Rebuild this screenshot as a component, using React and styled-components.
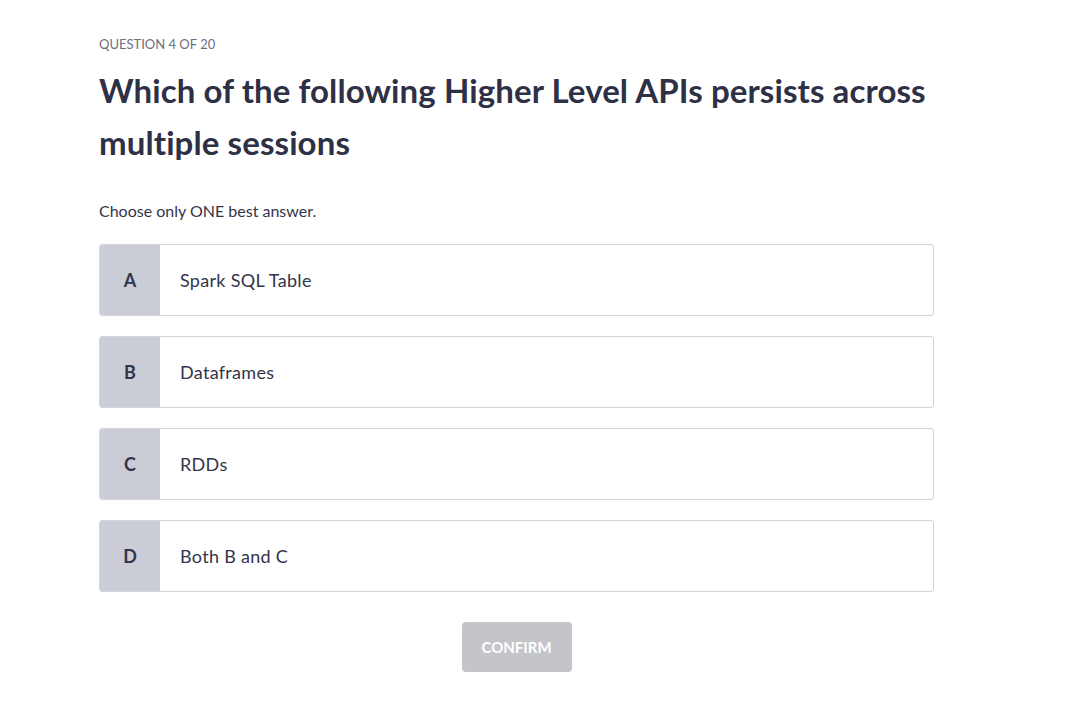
import React, { useState } from "react";
import styled, { createGlobalStyle } from "styled-components";

const GlobalStyle = createGlobalStyle`
  * { box-sizing: border-box; }
  body {
    margin: 0;
    background: #ffffff;
    font-family: Lato, "Noto Sans", "Liberation Sans", sans-serif;
    color: #33354a;
  }
`;

const Page = styled.main`
  padding: 36px 0 40px 99px;
`;

const Quiz = styled.section`
  width: 835px;
  display: flex;
  flex-direction: column;
`;

const Counter = styled.div`
  font-size: 13px;
  line-height: 16px;
  color: #6c7080;
  text-transform: uppercase;
`;

const Question = styled.h1`
  margin: 12px 0 0;
  font-size: 33px;
  line-height: 52px;
  font-weight: 700;
  color: #2e3045;
  letter-spacing: 0.1px;
`;

const Hint = styled.p`
  margin: 33px 0 23px;
  font-size: 16px;
  line-height: 20px;
  color: #33354a;
`;

const Options = styled.div`
  display: flex;
  flex-direction: column;
  gap: 20px;
`;

const Option = styled.button`
  display: flex;
  align-items: stretch;
  height: 72px;
  padding: 0;
  border: 1px solid ${(p) => (p.selected ? "#8a8fa3" : "#d3d5db")};
  border-radius: 3px;
  background: #ffffff;
  overflow: hidden;
  cursor: pointer;
  font-family: inherit;
  text-align: left;
`;

const Letter = styled.span`
  width: 60px;
  flex: none;
  display: flex;
  align-items: center;
  justify-content: center;
  background: ${(p) => (p.selected ? "#aeb2bf" : "#cacdd5")};
  font-size: 18px;
  font-weight: 700;
  color: #33354a;
`;

const Label = styled.span`
  display: flex;
  align-items: center;
  padding-left: 20px;
  font-size: 18px;
  letter-spacing: 0.3px;
  color: #33354a;
`;

const Actions = styled.div`
  display: flex;
  justify-content: center;
  margin-top: 30px;
`;

const ConfirmButton = styled.button`
  width: 110px;
  height: 50px;
  border: none;
  border-radius: 4px;
  background: ${(p) => (p.disabled ? "#c4c5ca" : "#3b3e57")};
  color: #ffffff;
  font-family: inherit;
  font-size: 15px;
  font-weight: 700;
  text-transform: uppercase;
  cursor: ${(p) => (p.disabled ? "default" : "pointer")};
`;

const answers = [
  { key: "A", text: "Spark SQL Table" },
  { key: "B", text: "Dataframes" },
  { key: "C", text: "RDDs" },
  { key: "D", text: "Both B and C" },
];

export default function App() {
  const [picked, setPicked] = useState(null);

  return (
    <>
      <GlobalStyle />
      <Page>
        <Quiz>
          <Counter>Question 4 of 20</Counter>
          <Question>
            Which of the following Higher Level APIs persists across multiple sessions
          </Question>
          <Hint>Choose only ONE best answer.</Hint>
          <Options>
            {answers.map((a) => (
              <Option
                key={a.key}
                selected={picked === a.key}
                onClick={() => setPicked(a.key)}
              >
                <Letter selected={picked === a.key}>{a.key}</Letter>
                <Label>{a.text}</Label>
              </Option>
            ))}
          </Options>
          <Actions>
            <ConfirmButton disabled={!picked}>Confirm</ConfirmButton>
          </Actions>
        </Quiz>
      </Page>
    </>
  );
}
